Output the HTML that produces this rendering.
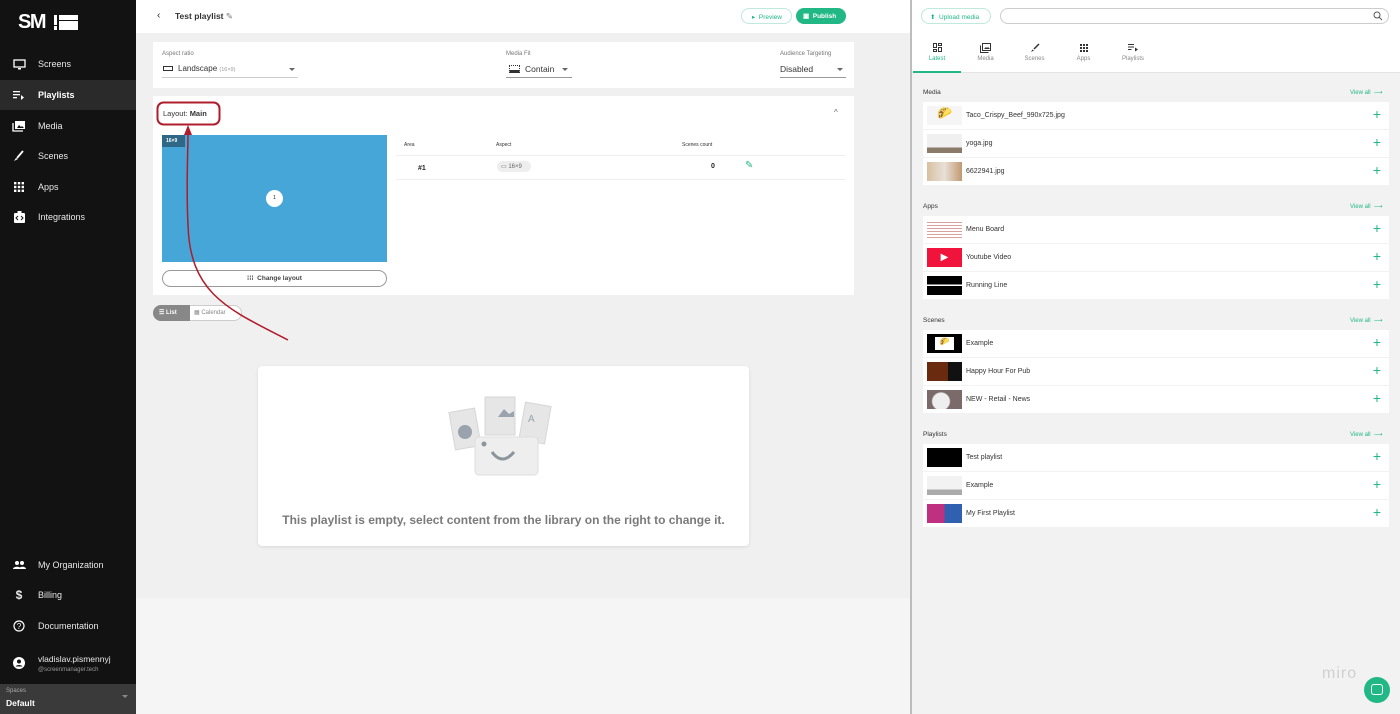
<!DOCTYPE html>
<html><head><meta charset="utf-8"><style>
*{box-sizing:border-box;margin:0;padding:0}
body{width:1400px;height:714px;overflow:hidden;font-family:"Liberation Sans",sans-serif;background:#f0f0f0;position:relative;font-size:8px;color:#222}
.abs{position:absolute}
#sb{left:0;top:0;width:136px;height:714px;background:#121212;color:#fff}
.nav{position:absolute;left:0;width:136px;height:30px;display:flex;align-items:center;font-size:9px;color:#e8e8e8}
.nav .ic{width:38px;display:flex;justify-content:center}
.card{background:#fff;position:absolute}
.row{position:absolute;left:923px;width:466px;height:27px;background:#fff;display:flex;align-items:center;font-size:7px;color:#333}
.row .th{width:35px;height:19px;margin:0 4px 0 4px}
.row .plus{position:absolute;right:8px;color:#21b886;font-size:14px;top:4px}
.sh{position:absolute;left:923px;font-size:6.5px;color:#333}
.va{position:absolute;left:1350px;font-size:6px;color:#21b886}
.tab{position:absolute;top:41px;text-align:center;font-size:6px;color:#888}
.tab .i{height:13px;display:flex;justify-content:center;align-items:center;margin-bottom:2px}
</style></head><body>
<div id="sb" class="abs">
<div class="abs" style="left:18px;top:11px;font-size:20px;font-weight:bold;letter-spacing:-1.5px">SM</div>
<div class="abs" style="left:59px;top:15px;width:19px;height:15px;background:#fff"></div>
<div class="abs" style="left:59px;top:20px;width:19px;height:1px;background:#121212"></div>
<div class="abs" style="left:54px;top:15px;width:3px;height:10px;background:#fff"></div>
<div class="abs" style="left:54px;top:26px;width:3px;height:4px;background:#fff"></div>
<div class="nav" style="top:49px"><span class="ic"><svg width="13" height="11"><rect x="1" y="1" width="11" height="7" fill="none" stroke="#fff" stroke-width="1.3"/><rect x="5" y="9" width="3" height="1.5" fill="#fff"/></svg></span>Screens</div>
<div class="nav" style="top:80px;background:#2a2a2a;font-weight:bold;color:#fff"><span class="ic"><svg width="12" height="10"><rect x="0" y="1" width="7" height="1.3" fill="#fff"/><rect x="0" y="4" width="7" height="1.3" fill="#fff"/><rect x="0" y="7" width="4" height="1.3" fill="#fff"/><path d="M8 5l3 2.5-3 2.5z" fill="#fff"/></svg></span>Playlists</div>
<div class="nav" style="top:111px"><span class="ic"><svg width="14" height="12"><rect x="3" y="1" width="10" height="8" fill="#fff"/><path d="M1 3v8h10" stroke="#fff" fill="none" stroke-width="1.3"/><path d="M5 8l2-3 2 2 1-1 2 2z" fill="#121212"/></svg></span>Media</div>
<div class="nav" style="top:141px"><span class="ic"><svg width="12" height="12"><path d="M10 1L4 8" stroke="#fff" stroke-width="1.8"/><path d="M1 11l2-3 2 1z" fill="#fff"/></svg></span>Scenes</div>
<div class="nav" style="top:172px"><span class="ic"><svg width="10" height="10" fill="#fff"><rect x="0" y="0" width="2.4" height="2.4"/><rect x="3.8" y="0" width="2.4" height="2.4"/><rect x="7.6" y="0" width="2.4" height="2.4"/><rect x="0" y="3.8" width="2.4" height="2.4"/><rect x="3.8" y="3.8" width="2.4" height="2.4"/><rect x="7.6" y="3.8" width="2.4" height="2.4"/><rect x="0" y="7.6" width="2.4" height="2.4"/><rect x="3.8" y="7.6" width="2.4" height="2.4"/><rect x="7.6" y="7.6" width="2.4" height="2.4"/></svg></span>Apps</div>
<div class="nav" style="top:202px"><span class="ic"><svg width="11" height="12"><rect x="0" y="2" width="11" height="10" rx="1" fill="#fff"/><rect x="3.5" y="0" width="4" height="3" fill="#fff"/><path d="M4 5l-2 2 2 2M7 5l2 2-2 2" stroke="#121212" fill="none"/></svg></span>Integrations</div>
<div class="nav" style="top:550px"><span class="ic"><svg width="13" height="8" fill="#fff"><circle cx="4" cy="2" r="2"/><circle cx="9" cy="2" r="2"/><path d="M0 8c0-3 8-3 8 0zM6 8c0-3 7-3 7 0z"/></svg></span>My Organization</div>
<div class="nav" style="top:580px"><span class="ic" style="font-size:12px;font-weight:bold">$</span>Billing</div>
<div class="nav" style="top:611px"><span class="ic"><svg width="12" height="12"><circle cx="6" cy="6" r="5" stroke="#fff" fill="none" stroke-width="1.2"/><text x="6" y="9" font-size="8" fill="#fff" text-anchor="middle" font-family="Liberation Sans">?</text></svg></span>Documentation</div>
<div class="nav" style="top:648px;height:30px;align-items:center"><span class="ic"><svg width="12" height="12"><circle cx="6" cy="6" r="6" fill="#fff"/><circle cx="6" cy="4.5" r="2" fill="#121212"/><path d="M2.5 9.5c1-2 6-2 7 0" fill="#121212"/></svg></span><div><div style="font-size:8.5px">vladislav.pismennyj</div><div style="font-size:6px;color:#999;margin-top:3px">@screenmanager.tech</div></div></div>
<div class="abs" style="left:0;top:684px;width:136px;height:30px;background:#3a3a3a"><div style="position:absolute;left:6px;top:4px;font-size:6px;color:#aaa">Spaces</div><div style="position:absolute;left:6px;top:14px;font-size:8.5px;color:#fff;font-weight:bold">Default</div><div style="position:absolute;right:8px;top:11px;border:3px solid transparent;border-top-color:#888"></div></div>
</div>
<!-- main -->
<div class="abs" style="left:136px;top:0;width:774px;height:33px;background:#fff"></div>
<div class="abs" style="left:157px;top:10px;font-size:10px">‹</div>
<div class="abs" style="left:175px;top:11px;font-size:8.5px;font-weight:bold;color:#333">Test playlist <span style="font-weight:normal;color:#777">✎</span></div>
<div class="abs" style="left:741px;top:8px;width:51px;height:16px;border:1px solid #bfe9da;border-radius:8px;font-size:6.5px;color:#21b886;padding:4px 0 0 10px">▸ &nbsp;Preview</div>
<div class="abs" style="left:796px;top:8px;width:50px;height:16px;background:#21b886;border-radius:8px;font-size:6.5px;color:#fff;font-weight:bold;padding:4px 0 0 7px">▣ &nbsp;Publish</div>
<div class="abs" style="left:136px;top:598px;width:774px;height:116px;background:#f5f5f5"></div>
<div class="card" style="left:153px;top:42px;width:701px;height:46px"></div>
<div class="abs" style="left:162px;top:51px;font-size:6px;color:#777">Aspect ratio</div>
<div class="abs" style="left:163px;top:64px;font-size:8px;color:#333"><span style="display:inline-block;width:10px;height:5px;border:1.3px solid #333;margin-right:5px"></span>Landscape <span style="font-size:5.5px;color:#999">(16×9)</span></div>
<div class="abs" style="left:162px;top:77px;width:136px;height:1px;background:#ccc"></div>
<div class="abs" style="left:289px;top:68px;border:3px solid transparent;border-top-color:#666"></div>
<div class="abs" style="left:506px;top:51px;font-size:6px;color:#777">Media Fit</div>
<div class="abs" style="left:509px;top:64px;font-size:8.5px;color:#333"><span style="display:inline-block;width:11px;height:8px;border:1px dotted #333;border-bottom:3px solid #333;margin-right:5px;vertical-align:-1px"></span>Contain</div>
<div class="abs" style="left:506px;top:77px;width:66px;height:1px;background:#999"></div>
<div class="abs" style="left:562px;top:68px;border:3px solid transparent;border-top-color:#666"></div>
<div class="abs" style="left:780px;top:51px;font-size:6px;color:#777">Audience Targeting</div>
<div class="abs" style="left:780px;top:64px;font-size:8.5px;color:#333">Disabled</div>
<div class="abs" style="left:780px;top:77px;width:66px;height:1px;background:#999"></div>
<div class="abs" style="left:837px;top:68px;border:3px solid transparent;border-top-color:#666"></div>
<div class="card" style="left:153px;top:96px;width:701px;height:199px"></div>
<div class="abs" style="left:163px;top:109px;font-size:7.5px;color:#333">Layout: <b>Main</b></div>
<div class="abs" style="left:834px;top:108px;font-size:8px;color:#666">^</div>
<div class="abs" style="left:162px;top:135px;width:225px;height:127px;background:#47a6d8"></div>
<div class="abs" style="left:162px;top:135px;width:23px;height:12px;background:#2f6787;color:#fff;font-size:5px;font-weight:bold;padding:3px 0 0 4px">16×9</div>
<div class="abs" style="left:266px;top:190px;width:17px;height:17px;border-radius:50%;background:#fff;font-size:5px;text-align:center;line-height:17px">1</div>
<div class="abs" style="left:162px;top:270px;width:225px;height:17px;border:1px solid #999;border-radius:9px;font-size:6.5px;text-align:center;line-height:15px;font-weight:bold;color:#444">⁞⁞⁞ &nbsp;Change layout</div>
<div class="abs" style="left:404px;top:142px;font-size:5px;color:#333">Area</div>
<div class="abs" style="left:496px;top:142px;font-size:5px;color:#333">Aspect</div>
<div class="abs" style="left:682px;top:142px;font-size:5px;color:#333">Scenes count</div>
<div class="abs" style="left:396px;top:155px;width:450px;height:1px;background:#eee"></div>
<div class="abs" style="left:396px;top:179px;width:450px;height:1px;background:#eee"></div>
<div class="abs" style="left:418px;top:165px;font-size:7px;font-weight:bold">#1</div>
<div class="abs" style="left:497px;top:161px;width:34px;height:11px;border-radius:6px;background:#eee;font-size:6px;color:#666;padding:2px 0 0 4px">▭ 16×9</div>
<div class="abs" style="left:711px;top:163px;font-size:7px;font-weight:bold">0</div>
<div class="abs" style="left:745px;top:160px;font-size:10px;color:#21b886">✎</div>
<div class="abs" style="left:153px;top:305px;width:89px;height:16px;border:1px solid #ccc;border-radius:8px;background:#fff"></div>
<div class="abs" style="left:153px;top:305px;width:37px;height:16px;border-radius:8px 0 0 8px;background:#888;color:#fff;font-size:6px;padding:4px 0 0 6px;font-weight:bold">☰ List</div>
<div class="abs" style="left:194px;top:309px;font-size:6px;color:#888">▦ Calendar</div>
<div class="card" style="left:258px;top:366px;width:491px;height:180px;border-radius:4px;box-shadow:0 1px 3px rgba(0,0,0,.1)"></div>
<svg class="abs" style="left:440px;top:392px" width="125" height="90">
<g fill="#e6e6e6" stroke="#d6d6d6"><rect x="12" y="18" width="26" height="38" transform="rotate(-10 25 37)"/><rect x="45" y="5" width="30" height="38"/><rect x="82" y="12" width="26" height="38" transform="rotate(10 95 31)"/></g>
<circle cx="25" cy="40" r="7" fill="#9aa3ad"/><path d="M58 25l6-8 5 5 5-3v6z" fill="#9aa3ad"/><text x="88" y="30" font-size="10" fill="#9aa3ad" font-family="Liberation Sans">A</text>
<rect x="35" y="45" width="63" height="38" rx="4" fill="#eeeeee" stroke="#dedede"/>
<circle cx="44" cy="52" r="2.5" fill="#8c949c"/><path d="M52 60q10 14 22 0" stroke="#8c949c" stroke-width="3" fill="none"/>
</svg>
<div class="abs" style="left:258px;top:513px;width:491px;text-align:center;font-size:12px;font-weight:bold;color:#7a7a7a">This playlist is empty, select content from the library on the right to change it.</div>
<!-- annotation -->
<svg class="abs" style="left:150px;top:95px" width="160" height="260">
<rect x="7.5" y="7.5" width="62" height="22" rx="6" fill="none" stroke="#b01c2b" stroke-width="2"/>
<path d="M138 245C80 215 40 200 38 130C36 90 38 60 38 38" fill="none" stroke="#b01c2b" stroke-width="1.5"/>
<path d="M34 40L38 30L42 40z" fill="#b01c2b"/>
</svg>
<!-- divider -->
<div class="abs" style="left:910px;top:0;width:2px;height:714px;background:#bdbdbd"></div>
<!-- right panel -->
<div class="abs" style="left:912px;top:0;width:488px;height:714px;background:#f2f2f2"></div>
<div class="abs" style="left:912px;top:0;width:488px;height:73px;background:#fff"></div>
<div class="abs" style="left:921px;top:8px;width:70px;height:16px;border:1px solid #bfe9da;border-radius:8px;font-size:6.5px;color:#21b886;padding:4px 0 0 8px">⬆ &nbsp;Upload media</div>
<div class="abs" style="left:1000px;top:8px;width:389px;height:16px;border:1px solid #ccc;border-radius:8px"></div>
<svg class="abs" style="left:1373px;top:11px" width="10" height="10"><circle cx="4" cy="4" r="3" stroke="#555" fill="none"/><path d="M6 6l3 3" stroke="#555"/></svg>
<div class="abs" style="left:912px;top:72px;width:488px;height:1px;background:#e4e4e4"></div>
<div class="abs" style="left:913px;top:71px;width:48px;height:2px;background:#21b886"></div>
<div class="tab" style="left:913px;width:48px;color:#21b886"><div class="i"><svg width="9" height="9" fill="none" stroke="#333" stroke-width="1"><rect x=".5" y=".5" width="3" height="4"/><rect x="5.5" y=".5" width="3" height="2"/><rect x="5.5" y="4.5" width="3" height="4"/><rect x=".5" y="6.5" width="3" height="2"/></svg></div>Latest</div>
<div class="tab" style="left:961px;width:49px"><div class="i"><svg width="11" height="10"><rect x="2.5" y=".5" width="8" height="7" fill="none" stroke="#333"/><path d="M.5 2.5v7h8" stroke="#333" fill="none"/><path d="M4 6l2-2 1 1 1-1 2 2z" fill="#333"/></svg></div>Media</div>
<div class="tab" style="left:1010px;width:49px"><div class="i"><svg width="10" height="10"><path d="M9 1L4 6" stroke="#333" stroke-width="1.5"/><path d="M1 9l1.5-2.5 1.5 1z" fill="#333"/></svg></div>Scenes</div>
<div class="tab" style="left:1059px;width:49px"><div class="i"><svg width="8" height="8" fill="#333"><rect x="0" y="0" width="2" height="2"/><rect x="3" y="0" width="2" height="2"/><rect x="6" y="0" width="2" height="2"/><rect x="0" y="3" width="2" height="2"/><rect x="3" y="3" width="2" height="2"/><rect x="6" y="3" width="2" height="2"/><rect x="0" y="6" width="2" height="2"/><rect x="3" y="6" width="2" height="2"/><rect x="6" y="6" width="2" height="2"/></svg></div>Apps</div>
<div class="tab" style="left:1108px;width:50px"><div class="i"><svg width="10" height="8"><rect x="0" y="0" width="6" height="1" fill="#333"/><rect x="0" y="2.5" width="6" height="1" fill="#333"/><rect x="0" y="5" width="3.5" height="1" fill="#333"/><path d="M7 3.5l3 2-3 2z" fill="#333"/></svg></div>Playlists</div>

<div class="sh" style="top:89px">Media</div><div class="va" style="top:89px">View all &nbsp;⟶</div>
<div class="row" style="top:102px"><div class="th" style="background:#f5f5f5;text-align:center;font-size:12px">🌮</div>Taco_Crispy_Beef_990x725.jpg<span class="plus">+</span></div>
<div class="row" style="top:130px"><div class="th" style="background:linear-gradient(#f0f0f0 70%,#8a7a6a 70%)"></div>yoga.jpg<span class="plus">+</span></div>
<div class="row" style="top:158px"><div class="th" style="background:linear-gradient(90deg,#d8c0a0,#e8e0d8,#c09a70)"></div>6622941.jpg<span class="plus">+</span></div>

<div class="sh" style="top:203px">Apps</div><div class="va" style="top:203px">View all &nbsp;⟶</div>
<div class="row" style="top:216px"><div class="th" style="background:repeating-linear-gradient(#fff 0 2px,#d9a0a0 2px 3px)"></div>Menu Board<span class="plus">+</span></div>
<div class="row" style="top:244px"><div class="th" style="background:#f0143c;color:#fff;text-align:center;font-size:10px;line-height:19px">▶</div>Youtube Video<span class="plus">+</span></div>
<div class="row" style="top:272px"><div class="th" style="background:linear-gradient(#000 45%,#fff 45%,#fff 52%,#000 52%)"></div>Running Line<span class="plus">+</span></div>

<div class="sh" style="top:317px">Scenes</div><div class="va" style="top:317px">View all &nbsp;⟶</div>
<div class="row" style="top:330px"><div class="th" style="background:#000;padding:3px 8px"><div style="background:#fff;height:13px;text-align:center;font-size:8px">🌮</div></div>Example<span class="plus">+</span></div>
<div class="row" style="top:358px"><div class="th" style="background:linear-gradient(90deg,#6a2a10 60%,#111 60%)"></div>Happy Hour For Pub<span class="plus">+</span></div>
<div class="row" style="top:386px"><div class="th" style="background:radial-gradient(circle at 40% 60%,#eee 35%,#7a6a6a 40%)"></div>NEW - Retail - News<span class="plus">+</span></div>

<div class="sh" style="top:431px">Playlists</div><div class="va" style="top:431px">View all &nbsp;⟶</div>
<div class="row" style="top:444px"><div class="th" style="background:#000"></div>Test playlist<span class="plus">+</span></div>
<div class="row" style="top:472px"><div class="th" style="background:linear-gradient(#f2f2f2 70%,#aaa 70%)"></div>Example<span class="plus">+</span></div>
<div class="row" style="top:500px"><div class="th" style="background:linear-gradient(90deg,#c03080 50%,#3060b0 50%)"></div>My First Playlist<span class="plus">+</span></div>

<div class="abs" style="left:1322px;top:665px;font-size:16px;color:#d0d0d0;letter-spacing:1px">miro</div>
<div class="abs" style="left:1364px;top:677px;width:26px;height:26px;border-radius:50%;background:#21b886"></div>
<div class="abs" style="left:1371px;top:684px;width:12px;height:11px;border:1.5px solid #fff;border-radius:3px"></div>
</body></html>
